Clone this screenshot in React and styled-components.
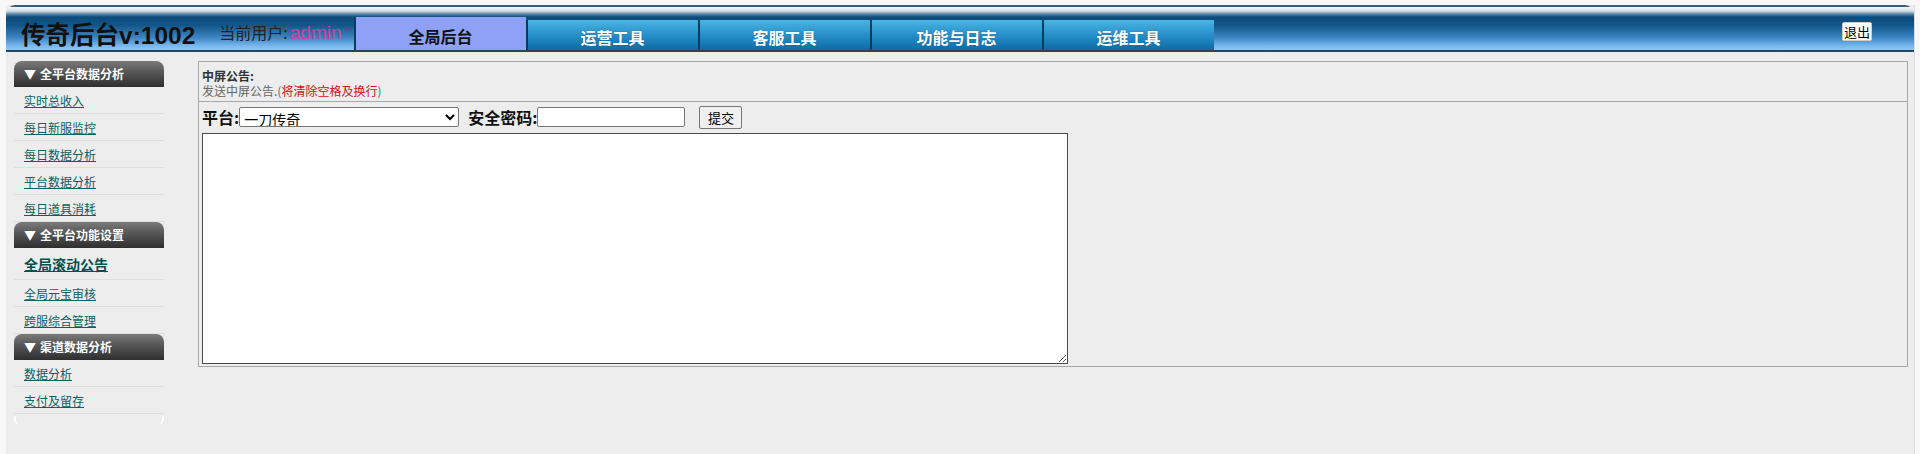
import React from "react";
import styled, { createGlobalStyle } from "styled-components";

const GlobalStyle = createGlobalStyle`
  html, body { margin: 0; padding: 0; }
  body {
    background: #f8f8f8;
    font-family: "Noto Sans CJK SC", "Liberation Sans", sans-serif;
    font-size: 12px;
    color: #333;
  }
`;

const Page = styled.div`
  margin: 5px 5px 0 5px;
  width: 1910px;
  min-height: 449px;
  background: #ededed;
  border-left: 1px solid #f6f6f6;
  border-right: 1px solid #dcdcdc;
  box-sizing: border-box;
  display: flex;
  flex-direction: column;
`;

const Header = styled.div`
  height: 45px;
  border-bottom: 2px solid #26465f;
  border-radius: 9px 9px 0 0;
  background: linear-gradient(
    to bottom,
    #3e5d7a 0px,
    #3e5d7a 2px,
    #f4f7f9 2px,
    #d3dfe7 6px,
    #5d88aa 9px,
    #0d4b7b 12px,
    #115587 20px,
    #3f86c4 33px,
    #7ab8ee 41px,
    #8fc6f6 45px
  );
  display: flex;
  align-items: flex-end;
  padding-left: 15px;
  box-sizing: content-box;
`;

const Title = styled.div`
  font-family: "Liberation Sans", "Noto Sans CJK SC", sans-serif;
  font-weight: bold;
  font-size: 24.5px;
  line-height: 28px;
  color: #111;
  white-space: nowrap;
`;

const UserLabel = styled.div`
  margin-left: 24px;
  margin-bottom: 7px;
  font-size: 16px;
  line-height: 20px;
  color: #222;
  white-space: nowrap;
`;

const UserName = styled.span`
  font-family: "Liberation Sans", sans-serif;
  font-size: 19px;
  color: #d9399e;
  margin-left: 2px;
`;

const Tabs = styled.div`
  display: flex;
  align-items: flex-end;
  margin-left: 12px;
`;

const Tab = styled.div`
  width: 172px;
  height: ${(p) => (p.$active ? 33 : 30)}px;
  border-left: 2px solid #0d3d5e;
  background: ${(p) =>
    p.$active ? "#8ea1f7" : "linear-gradient(to bottom, #4ab5e4 0%, #2a93cc 45%, #0b6ba6 100%)"};
  color: ${(p) => (p.$active ? "#111" : "#fff")};
  font-weight: bold;
  font-size: 16px;
  display: flex;
  align-items: center;
  justify-content: center;
  padding-top: ${(p) => (p.$active ? 5 : 4)}px;
  box-sizing: border-box;
  text-shadow: ${(p) => (p.$active ? "none" : "0 0 1px rgba(0,40,80,0.5)")};
`;

const Logout = styled.button`
  margin-left: auto;
  margin-right: 42px;
  align-self: flex-start;
  margin-top: 17px;
  height: 19px;
  padding: 0 1px;
  background: #fff;
  border: 1px solid #ccc;
  border-radius: 2px;
  font-family: "Noto Sans CJK SC", sans-serif;
  font-size: 13px;
  line-height: 16px;
  color: #000;
`;

const Body = styled.div`
  display: flex;
  align-items: flex-start;
  padding-top: 9px;
`;

const Sidebar = styled.div`
  width: 150px;
  margin-left: 8px;
  display: flex;
  flex-direction: column;
`;

const SectionHead = styled.div`
  height: 26px;
  border-radius: 8px 8px 0 0;
  background: linear-gradient(to bottom, #7a7a7a 0%, #555 45%, #2e2e2e 100%);
  color: #fff;
  font-weight: bold;
  font-size: 12px;
  line-height: 26px;
  padding-left: 10px;
  display: flex;
  gap: 4px;
`;

const Item = styled.div`
  height: ${(p) => (p.$current ? 32 : 27)}px;
  border-bottom: 1px solid #dedede;
  box-sizing: border-box;
  display: flex;
  align-items: center;
  padding-left: 10px;
`;

const ItemLink = styled.a`
  color: ${(p) => (p.$current ? "#064e50" : "#0b6063")};
  font-size: ${(p) => (p.$current ? 14 : 12)}px;
  font-weight: ${(p) => (p.$current ? "bold" : "normal")};
  text-decoration: underline;
  cursor: pointer;
`;

const SidebarFoot = styled.div`
  height: 9px;
  margin-top: 2px;
  border-left: 2px solid #fff;
  border-right: 2px solid #fff;
  border-radius: 0 0 6px 6px;
  width: 146px;
`;

const Panel = styled.div`
  margin-left: 34px;
  width: 1710px;
  height: 306px;
  border: 1px solid #a8a8a8;
  box-sizing: border-box;
  display: flex;
  flex-direction: column;
`;

const PanelHead = styled.div`
  height: 40px;
  border-bottom: 1px solid #a8a8a8;
  box-sizing: border-box;
  padding: 6px 0 0 3px;
`;

const PanelTitle = styled.div`
  font-weight: bold;
  font-size: 12px;
  line-height: 15px;
  color: #333;
`;

const PanelDesc = styled.div`
  font-size: 12px;
  line-height: 16px;
  color: #666;
`;

const Warn = styled.span`
  color: #d41010;
`;

const PanelBody = styled.div`
  padding: 3px 0 0 3px;
  display: flex;
  flex-direction: column;
`;

const FormRow = styled.div`
  display: flex;
  align-items: center;
  height: 24px;
`;

const Label = styled.label`
  font-weight: bold;
  font-size: 16px;
  color: #111;
  margin-left: ${(p) => p.$gap || 0}px;
  white-space: nowrap;
`;

const Select = styled.select`
  width: 220px;
  height: 20px;
  font-family: "Noto Sans CJK SC", sans-serif;
  font-size: 14px;
  border: 1px solid #767676;
  border-radius: 2px;
  background: #fff;
  padding: 0;
  color: #000;
`;

const TextInput = styled.input`
  width: 148px;
  height: 20px;
  box-sizing: border-box;
  border: 1px solid #767676;
  border-radius: 2px;
  background: #fff;
  padding: 0 2px;
`;

const SubmitButton = styled.button`
  margin-left: 14px;
  height: 23px;
  width: 43px;
  padding: 0;
  font-family: "Noto Sans CJK SC", sans-serif;
  font-size: 13px;
  background: #efefef;
  border: 1px solid #767676;
  border-radius: 2px;
  color: #000;
`;

const TextArea = styled.textarea`
  margin-top: 4px;
  width: 866px;
  height: 231px;
  box-sizing: border-box;
  border: 1px solid #4a4a4a;
  background: #fff;
  resize: both;
`;

const sections = [
  {
    title: "全平台数据分析",
    items: ["实时总收入", "每日新服监控", "每日数据分析", "平台数据分析", "每日道具消耗"],
  },
  {
    title: "全平台功能设置",
    items: ["全局滚动公告", "全局元宝审核", "跨服综合管理"],
    current: "全局滚动公告",
  },
  {
    title: "渠道数据分析",
    items: ["数据分析", "支付及留存"],
  },
];

const tabs = ["全局后台", "运营工具", "客服工具", "功能与日志", "运维工具"];

export default function App() {
  return (
    <>
      <GlobalStyle />
      <Page>
        <Header>
          <Title>传奇后台v:1002</Title>
          <UserLabel>
            当前用户:<UserName>admin</UserName>
          </UserLabel>
          <Tabs>
            {tabs.map((t, i) => (
              <Tab key={t} $active={i === 0}>
                {t}
              </Tab>
            ))}
          </Tabs>
          <Logout>退出</Logout>
        </Header>
        <Body>
          <Sidebar>
            {sections.map((s) => (
              <React.Fragment key={s.title}>
                <SectionHead>
                  <span>▼</span>
                  <span>{s.title}</span>
                </SectionHead>
                {s.items.map((it) => (
                  <Item key={it} $current={it === s.current}>
                    <ItemLink $current={it === s.current}>{it}</ItemLink>
                  </Item>
                ))}
              </React.Fragment>
            ))}
            <SidebarFoot />
          </Sidebar>
          <Panel>
            <PanelHead>
              <PanelTitle>中屏公告:</PanelTitle>
              <PanelDesc>
                发送中屏公告.(<Warn>将清除空格及换行</Warn>)
              </PanelDesc>
            </PanelHead>
            <PanelBody>
              <FormRow>
                <Label>平台:</Label>
                <Select defaultValue="1">
                  <option value="1">一刀传奇</option>
                </Select>
                <Label $gap={9}>安全密码:</Label>
                <TextInput type="password" />
                <SubmitButton>提交</SubmitButton>
              </FormRow>
              <TextArea />
            </PanelBody>
          </Panel>
        </Body>
      </Page>
    </>
  );
}
